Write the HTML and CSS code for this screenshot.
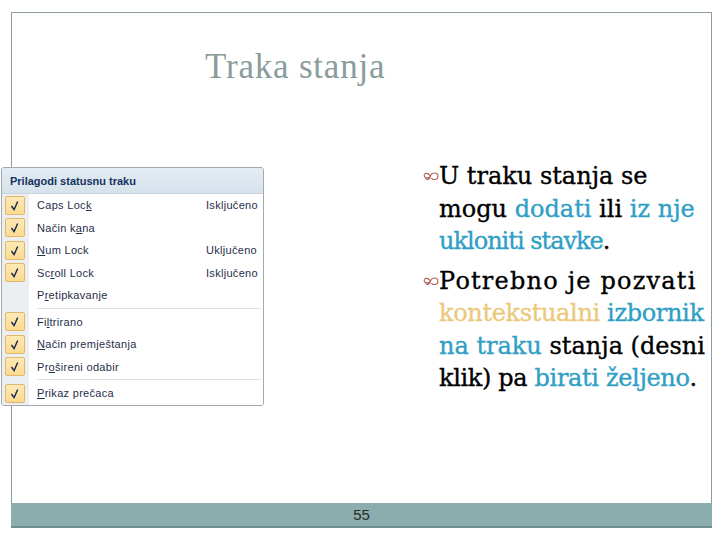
FILE: index.html
```html
<!DOCTYPE html>
<html lang="hr">

<head>
    <meta charset="UTF-8">
    <meta name="viewport" content="width=device-width, initial-scale=1.0">
    <title>Traka stanja</title>
    <link rel="stylesheet" href="styles.css">
</head>

<body>
    <div class="slide">
        <h1 class="title">Traka stanja</h1>

        <div class="content">
            <div class="menu">
                <div class="menu-head">Prilagodi statusnu traku</div>
                <div class="menu-body">
                    <div class="row"><span class="check"><svg viewBox="0 0 20 19"><path d="M6 10 L9 14 L13 5" /></svg></span><span class="name">Caps Loc<u>k</u></span><span class="val">Isključeno</span></div>
                    <div class="row"><span class="check"><svg viewBox="0 0 20 19"><path d="M6 10 L9 14 L13 5" /></svg></span><span class="name">Način k<u>a</u>na</span><span class="val"></span></div>
                    <div class="row"><span class="check"><svg viewBox="0 0 20 19"><path d="M6 10 L9 14 L13 5" /></svg></span><span class="name"><u>N</u>um Lock</span><span class="val">Uključeno</span></div>
                    <div class="row"><span class="check"><svg viewBox="0 0 20 19"><path d="M6 10 L9 14 L13 5" /></svg></span><span class="name">Sc<u>r</u>oll Lock</span><span class="val">Isključeno</span></div>
                    <div class="row"><span class="nocheck"></span><span class="name">P<u>r</u>etipkavanje</span><span class="val"></span></div>
                    <div class="sep"></div>
                    <div class="row"><span class="check"><svg viewBox="0 0 20 19"><path d="M6 10 L9 14 L13 5" /></svg></span><span class="name">Fi<u>l</u>trirano</span><span class="val"></span></div>
                    <div class="row"><span class="check"><svg viewBox="0 0 20 19"><path d="M6 10 L9 14 L13 5" /></svg></span><span class="name"><u>N</u>ačin premještanja</span><span class="val"></span></div>
                    <div class="row"><span class="check"><svg viewBox="0 0 20 19"><path d="M6 10 L9 14 L13 5" /></svg></span><span class="name">Pr<u>o</u>šireni odabir</span><span class="val"></span></div>
                    <div class="sep"></div>
                    <div class="row"><span class="check"><svg viewBox="0 0 20 19"><path d="M6 10 L9 14 L13 5" /></svg></span><span class="name"><u>P</u>rikaz prečaca</span><span class="val"></span></div>
                </div>
            </div>

            <div class="text">
                <p><span class="bullet"><svg viewBox="0 0 16 10"><path d="M7.5 5.5 C6 1.5, 1 1.5, 1.2 4.5 C1.4 7.5, 5.5 7.5, 7.5 5.5 C7 8.5, 3.5 9, 2.5 7.5 M7.5 5.5 C8.5 1, 15 1, 15 5 C15 9, 9.5 9.5, 8.5 7" /></svg></span>U traku stanja se<br>
                    mogu <span class="blue">dodati</span> ili <span class="blue">iz nje</span><br>
                    <span class="blue tight">ukloniti stavke</span>.</p>
                <p><span class="bullet"><svg viewBox="0 0 16 10"><path d="M7.5 5.5 C6 1.5, 1 1.5, 1.2 4.5 C1.4 7.5, 5.5 7.5, 7.5 5.5 C7 8.5, 3.5 9, 2.5 7.5 M7.5 5.5 C8.5 1, 15 1, 15 5 C15 9, 9.5 9.5, 8.5 7" /></svg></span><span class="wide">Potrebno je pozvati</span><br>
                    <span class="snug"><span class="tan">kontekstualni</span> <span class="blue">izbornik</span></span><br>
                    <span class="blue">na traku</span> stanja (desni<br>
                    <span class="snug">klik) pa <span class="blue">birati željeno</span></span>.</p>
            </div>
        </div>

        <div class="footer">55</div>
    </div>
</body>

</html>
```

FILE: styles.css
```css
* {
    padding: 0;
    margin: 0;
    box-sizing: border-box;
}

body {
    background: white;
}

.slide {
    margin: 12px 0 0 11px;
    width: 701px;
    height: 516px;
    border: 1px solid #8d9d9d;
    border-bottom: none;
    display: flex;
    flex-direction: column;
}

.title {
    margin-top: 34px;
    padding-left: 193px;
    font-family: "Liberation Serif", serif;
    font-weight: normal;
    font-size: 35px;
    line-height: 40px;
    letter-spacing: 0.8px;
    color: #8a9c9c;
}

.content {
    flex: 1;
    display: flex;
    align-items: flex-start;
    padding-top: 73px;
}

/* status bar menu screenshot */
.menu {
    margin-top: 7px;
    margin-left: -11px;
    width: 263px;
    border: 1px solid #a4a9ae;
    border-radius: 3px;
    background: white;
    font-family: "Liberation Sans", sans-serif;
    overflow: hidden;
}

.menu-head {
    height: 26px;
    line-height: 26px;
    padding-left: 8px;
    background: linear-gradient(#e3ecf3, #d6e2ec);
    border-bottom: 1px solid #c9d3dc;
    font-size: 11px;
    font-weight: bold;
    color: #15325e;
}

.menu-body {
    background: linear-gradient(to right, #eceff2 0, #eceff2 27px, white 27px);
}

.row {
    height: 22.5px;
    display: flex;
    align-items: center;
    font-size: 11px;
    letter-spacing: 0.3px;
    color: #1f2e4a;
}

.check,
.nocheck {
    width: 20px;
    height: 19px;
    margin-left: 3px;
    margin-right: 12px;
}

.check {
    border: 1px solid #e2b767;
    border-radius: 2px;
    background: linear-gradient(#fee9b5, #fcdb92);
}

.check svg {
    display: block;
    width: 18px;
    height: 17px;
}

.check path {
    fill: none;
    stroke: #1e2a4c;
    stroke-width: 1.6;
}

.name {
    flex: 1;
}

.val {
    width: 57px;
}

.sep {
    height: 3px;
    margin-left: 35px;
    margin-right: 2px;
    border-top: 1px solid #dcdfe3;
    margin-top: 1px;
}

/* bullet text */
.text {
    margin-left: 159px;
    font-family: "DejaVu Serif", serif;
    font-size: 24px;
    line-height: 32.5px;
    color: #000;
    white-space: nowrap;
    -webkit-text-stroke: 0.35px currentColor;
}

.text p {
    padding-left: 16px;
    text-indent: -16px;
    margin-bottom: 7px;
}

.wide {
    letter-spacing: 1.2px;
}

.tight {
    letter-spacing: -1px;
}

.snug {
    letter-spacing: -0.35px;
}

.bullet {
    display: inline-block;
    width: 16px;
    text-indent: 0;
}

.bullet svg {
    width: 16px;
    height: 10px;
    vertical-align: 3px;
}

.bullet path {
    fill: none;
    stroke: #b3625c;
    stroke-width: 1.1;
}

.blue {
    color: #2f9fc5;
}

.tan {
    color: #ebc97c;
}

.footer {
    height: 25px;
    margin-left: -1px;
    margin-right: -1px;
    background: #8badad;
    border-bottom: 2px solid #6f8f8f;
    text-align: center;
    font-family: "Liberation Sans", sans-serif;
    font-size: 15px;
    line-height: 24px;
    color: #2a2a2a;
}
```
